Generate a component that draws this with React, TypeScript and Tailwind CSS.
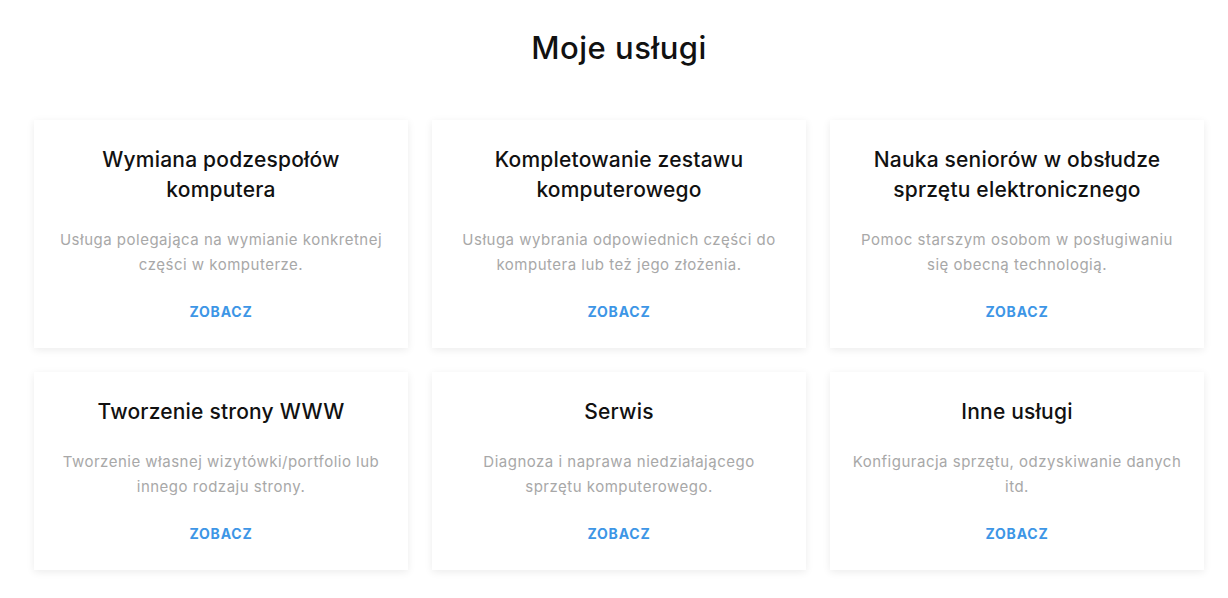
import React from "react";

const services = [
  { title: ["Wymiana podzespołów", "komputera"], desc: ["Usługa polegająca na wymianie konkretnej", "części w komputerze."] },
  { title: ["Kompletowanie zestawu", "komputerowego"], desc: ["Usługa wybrania odpowiednich części do", "komputera lub też jego złożenia."] },
  { title: ["Nauka seniorów w obsłudze", "sprzętu elektronicznego"], desc: ["Pomoc starszym osobom w posługiwaniu", "się obecną technologią."] },
  { title: ["Tworzenie strony WWW"], desc: ["Tworzenie własnej wizytówki/portfolio lub", "innego rodzaju strony."] },
  { title: ["Serwis"], desc: ["Diagnoza i naprawa niedziałającego", "sprzętu komputerowego."] },
  { title: ["Inne usługi"], desc: ["Konfiguracja sprzętu, odzyskiwanie danych", "itd."] },
];

export default function App() {
  return (
    <div className="w-[1228px] h-[598px] bg-white font-['Inter',sans-serif] overflow-hidden pl-[34px] pr-[24px]">
      <h2 className="text-center text-[31px] leading-[40px] font-medium text-[#111] pt-[28px] tracking-[0.5px]">Moje usługi</h2>
      <div className="grid grid-cols-3 gap-x-[24px] gap-y-[24px] mt-[52px]">
        {services.map((s, i) => (
          <div
            key={i}
            className={`bg-white shadow-[0_2px_8px_rgba(0,0,0,0.08)] flex flex-col items-center text-center ${i < 3 ? "h-[228px] pt-[25px]" : "h-[198px] pt-[25px]"}`}
          >
            <div className="text-[21px] leading-[30px] font-medium text-[#111] tracking-[0.2px]">
              {s.title.map((t, j) => (
                <div key={j}>{t}</div>
              ))}
            </div>
            <div className="mt-[22px] text-[15px] leading-[25px] text-[#a8a8a8] tracking-[0.5px]">
              {s.desc.map((t, j) => (
                <div key={j}>{t}</div>
              ))}
            </div>
            <div className="mt-[25px] text-[14px] leading-[20px] font-bold text-[#3d96e6] tracking-[0.8px]">ZOBACZ</div>
          </div>
        ))}
      </div>
    </div>
  );
}
